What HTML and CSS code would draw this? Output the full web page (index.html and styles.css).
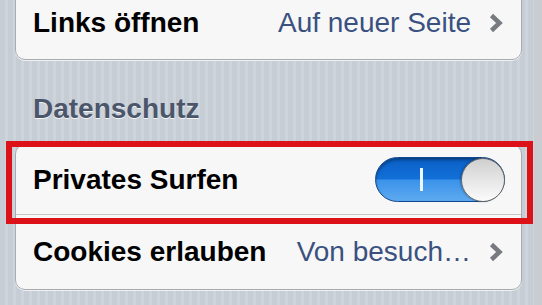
FILE: index.html
```html
<!DOCTYPE html>
<html lang="de">
<head>
<meta charset="utf-8">
<title>Einstellungen</title>
<link rel="stylesheet" href="styles.css">
</head>
<body>
<div class="screen">
  <div class="group group-top">
    <div class="row row-top">
      <span class="label">Links öffnen</span>
      <span class="value">Auf neuer Seite</span>
      <svg class="chevron" width="14" height="20" viewBox="0 0 14 20"><path d="M2.5 2.5 L10.5 10 L2.5 17.5" fill="none" stroke="#777a7e" stroke-width="4.5" stroke-linecap="butt" stroke-linejoin="miter"/></svg>
    </div>
  </div>

  <div class="section-header">Datenschutz</div>

  <div class="group">
    <div class="row row-a highlight">
      <span class="label">Privates Surfen</span>
      <div class="switch">
        <span class="switch-mark"></span>
        <span class="switch-knob"></span>
      </div>
    </div>
    <div class="row row-b">
      <span class="label">Cookies erlauben</span>
      <span class="value">Von besuch…</span>
      <svg class="chevron" width="14" height="20" viewBox="0 0 14 20"><path d="M2.5 2.5 L10.5 10 L2.5 17.5" fill="none" stroke="#777a7e" stroke-width="4.5" stroke-linecap="butt" stroke-linejoin="miter"/></svg>
    </div>
  </div>
</div>
</body>
</html>
```

FILE: styles.css
```css
html, body {
  margin: 0;
  padding: 0;
}

body {
  width: 542px;
  height: 305px;
  overflow: hidden;
  font-family: "Liberation Sans", Arial, Helvetica, sans-serif;
  background:
    linear-gradient(to left, #c9cdd2 0, #c9cdd2 8px, transparent 8px),
    repeating-linear-gradient(90deg, #c6cdd5 0, #c6cdd5 5px, #ced4db 5px, #ced4db 8px);
}

.screen {
  display: flex;
  flex-direction: column;
}

.group {
  margin: 0 20px 0 15px;
  background: #f7f7f7;
  border: 1px solid #a7abb1;
  border-radius: 10px;
  box-shadow: 0 1px 0 rgba(255, 255, 255, 0.7);
}

.group-top {
  margin-top: -14px;
}

.row {
  display: flex;
  align-items: center;
  padding: 0 17px 0 17px;
  position: relative;
}

.row-top {
  height: 72px;
}

.row-a {
  height: 69px;
  border-bottom: 1px solid #c4c6c9;
}

.row-b {
  height: 74px;
}

.label {
  font-size: 28px;
  font-weight: bold;
  color: #000;
  flex: 1;
  white-space: nowrap;
}

.value {
  font-size: 28px;
  color: #3a5180;
  white-space: nowrap;
  margin-right: 18px;
}

.chevron {
  display: block;
  flex: none;
  margin-right: 1px;
}

.section-header {
  margin: 33px 0 19px 33px;
  font-size: 28px;
  line-height: 32px;
  font-weight: bold;
  color: #4c566b;
  text-shadow: 0 1px 0 rgba(255, 255, 255, 0.8);
}

/* red annotation frame lying over the row */
.highlight::after {
  content: "";
  position: absolute;
  left: -10px;
  right: -12px;
  top: -4px;
  bottom: -10px;
  border: 6px solid #dd1219;
  pointer-events: none;
}

.switch {
  width: 128px;
  height: 43px;
  border: 1px solid #12488f;
  border-radius: 23px;
  display: flex;
  align-items: center;
  margin-right: -1px;
  background: linear-gradient(#0a5fc4 0%, #1170d8 48%, #3b93ea 52%, #5eaaf0 100%);
  box-shadow: inset 0 2px 3px rgba(0, 0, 0, 0.35);
}

.switch-mark {
  width: 3px;
  height: 23px;
  margin-left: 44px;
  background: #eef6ff;
}

.switch-knob {
  margin-left: auto;
  margin-right: -1px;
  width: 42px;
  height: 42px;
  border-radius: 50%;
  border: 1.5px solid #66686b;
  background: linear-gradient(#cfcfcf 0%, #e6e6e6 50%, #fbfbfb 100%);
  box-shadow: -1px 0 2px rgba(0, 0, 0, 0.25);
}
```
